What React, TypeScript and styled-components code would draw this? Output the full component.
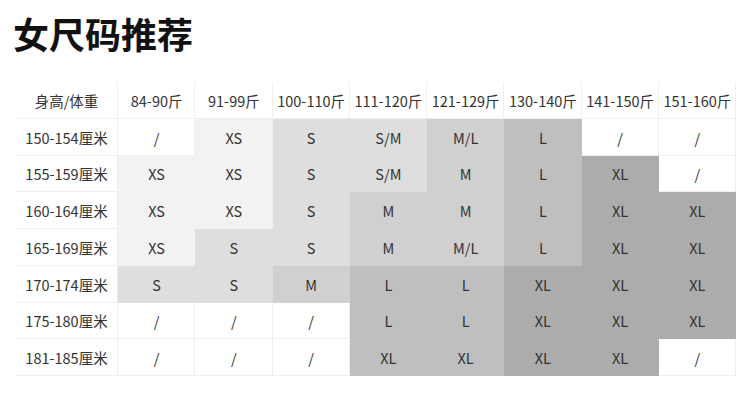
import React from "react";
import styled, { createGlobalStyle } from "styled-components";

const Global = createGlobalStyle`
  html, body { margin: 0; padding: 0; background: #fff; }
  body { font-family: "Noto Sans CJK SC", "Noto Sans", sans-serif; }
`;

const Page = styled.div`
  width: 750px;
  height: 401px;
  padding: 10px 14px 0 15px;
  box-sizing: border-box;
  background: #fff;
`;

const Title = styled.h1`
  margin: 0 0 0 -2px;
  font-size: 36px;
  line-height: 46px;
  font-weight: 700;
  color: #111;
  height: 72px;
`;

const Grid = styled.div`
  display: grid;
  width: 721px;
  grid-template-columns: 103px repeat(8, 1fr);
  grid-template-rows: repeat(8, 36.75px);
  box-shadow: inset 1px 1px 0 #efefef;
`;

const shades: Record<number, string> = {
  0: "#ffffff",
  1: "#f2f2f2",
  2: "#dedede",
  3: "#d0d0d0",
  4: "#bfbfbf",
  5: "#acacac",
};

const Cell = styled.div<{ $shade: number }>`
  display: flex;
  align-items: center;
  justify-content: center;
  font-size: 14.5px;
  color: #333;
  white-space: nowrap;
  background: ${(p) => shades[p.$shade]};
  box-shadow: ${(p) => (p.$shade === 0 ? "inset -1px -1px 0 #efefef" : "none")};
`;

const header = ["身高/体重", "84-90斤", "91-99斤", "100-110斤", "111-120斤", "121-129斤", "130-140斤", "141-150斤", "151-160斤"];

const rows: { h: string; cells: [string, number][] }[] = [
  { h: "150-154厘米", cells: [["/", 0], ["XS", 1], ["S", 2], ["S/M", 2], ["M/L", 3], ["L", 4], ["/", 0], ["/", 0]] },
  { h: "155-159厘米", cells: [["XS", 1], ["XS", 1], ["S", 2], ["S/M", 2], ["M", 3], ["L", 4], ["XL", 5], ["/", 0]] },
  { h: "160-164厘米", cells: [["XS", 1], ["XS", 1], ["S", 2], ["M", 3], ["M", 3], ["L", 4], ["XL", 5], ["XL", 5]] },
  { h: "165-169厘米", cells: [["XS", 1], ["S", 2], ["S", 2], ["M", 3], ["M/L", 3], ["L", 4], ["XL", 5], ["XL", 5]] },
  { h: "170-174厘米", cells: [["S", 2], ["S", 2], ["M", 3], ["L", 4], ["L", 4], ["XL", 5], ["XL", 5], ["XL", 5]] },
  { h: "175-180厘米", cells: [["/", 0], ["/", 0], ["/", 0], ["L", 4], ["L", 4], ["XL", 5], ["XL", 5], ["XL", 5]] },
  { h: "181-185厘米", cells: [["/", 0], ["/", 0], ["/", 0], ["XL", 4], ["XL", 4], ["XL", 5], ["XL", 5], ["/", 0]] },
];

export default function App() {
  return (
    <Page>
      <Global />
      <Title>女尺码推荐</Title>
      <Grid>
        {header.map((t) => (
          <Cell key={t} $shade={0}>{t}</Cell>
        ))}
        {rows.map((r) => (
          <React.Fragment key={r.h}>
            <Cell $shade={0}>{r.h}</Cell>
            {r.cells.map(([t, s], i) => (
              <Cell key={i} $shade={s}>{t}</Cell>
            ))}
          </React.Fragment>
        ))}
      </Grid>
    </Page>
  );
}
